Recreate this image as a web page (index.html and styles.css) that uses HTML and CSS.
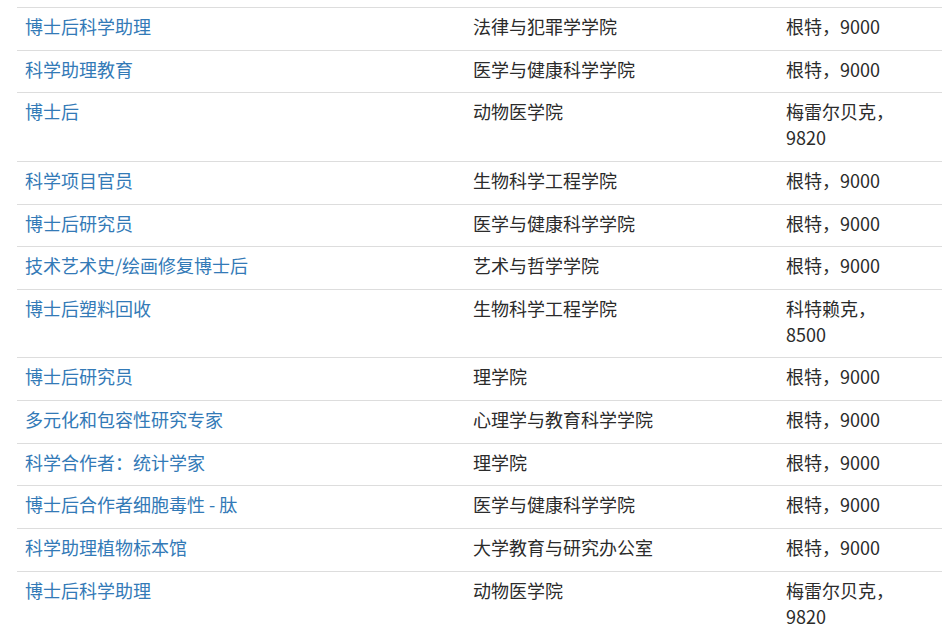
FILE: index.html
```html
<!DOCTYPE html>
<html lang="zh-CN">
<head>
<meta charset="utf-8">
<title>职位列表</title>
<link rel="stylesheet" href="styles.css">
</head>
<body>
<div class="page">
<table class="jobs">
<colgroup><col class="c-title"><col class="c-dept"><col class="c-loc"></colgroup>
<tbody>
<tr><td><a href="#">博士后科学助理</a></td><td>法律与犯罪学学院</td><td class="loc">根特，9000</td></tr>
<tr><td><a href="#">科学助理教育</a></td><td>医学与健康科学学院</td><td class="loc">根特，9000</td></tr>
<tr><td><a href="#">博士后</a></td><td>动物医学院</td><td class="loc">梅雷尔贝克，9820</td></tr>
<tr><td><a href="#">科学项目官员</a></td><td>生物科学工程学院</td><td class="loc">根特，9000</td></tr>
<tr><td><a href="#">博士后研究员</a></td><td>医学与健康科学学院</td><td class="loc">根特，9000</td></tr>
<tr><td><a href="#">技术艺术史/绘画修复博士后</a></td><td>艺术与哲学学院</td><td class="loc">根特，9000</td></tr>
<tr><td><a href="#">博士后塑料回收</a></td><td>生物科学工程学院</td><td class="loc">科特赖克，8500</td></tr>
<tr><td><a href="#">博士后研究员</a></td><td>理学院</td><td class="loc">根特，9000</td></tr>
<tr><td><a href="#">多元化和包容性研究专家</a></td><td>心理学与教育科学学院</td><td class="loc">根特，9000</td></tr>
<tr><td><a href="#">科学合作者：统计学家</a></td><td>理学院</td><td class="loc">根特，9000</td></tr>
<tr><td><a href="#">博士后合作者细胞毒性 - 肽</a></td><td>医学与健康科学学院</td><td class="loc">根特，9000</td></tr>
<tr><td><a href="#">科学助理植物标本馆</a></td><td>大学教育与研究办公室</td><td class="loc">根特，9000</td></tr>
<tr><td><a href="#">博士后科学助理</a></td><td>动物医学院</td><td class="loc">梅雷尔贝克，9820</td></tr>
</tbody>
</table>
</div>
</body>
</html>
```

FILE: styles.css
```css
html, body {
  margin: 0;
  padding: 0;
  background: #fff;
}
body {
  font-family: "Noto Sans CJK SC", "Noto Sans", sans-serif;
  font-size: 18px;
  line-height: 1.428571;
  color: #2b2b2b;
  overflow: hidden;
}
.page {
  padding: 7px 0 0 17px;
}
.jobs {
  width: 925px;
  border-collapse: collapse;
  border-spacing: 0;
  table-layout: fixed;
}
.c-title { width: 448px; }
.c-dept { width: 313px; }
.c-loc { width: 164px; }
.jobs td {
  padding: 6px 8px 10px;
  border-top: 1px solid #ddd;
  vertical-align: top;
  text-align: left;
}
.jobs td.loc {
  padding-right: 48px;
}
.jobs a {
  color: #337ab7;
  text-decoration: none;
}
```
